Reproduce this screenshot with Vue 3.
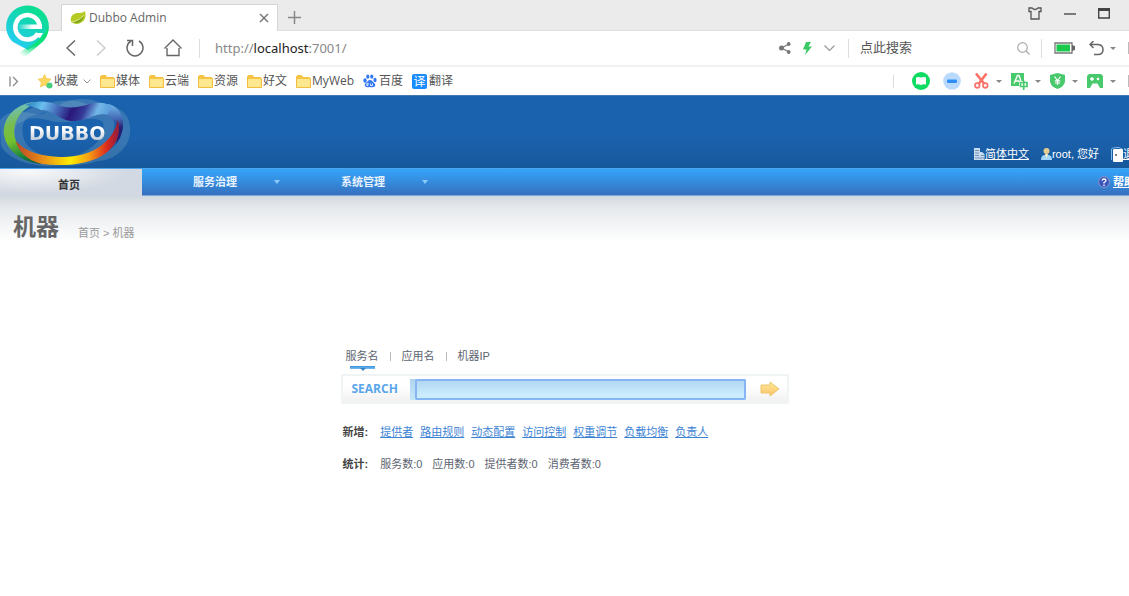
<script setup>
import { ref } from 'vue'

const folders = ['媒体', '云端', '资源', '好文', 'MyWeb']
const menus = ['服务治理', '系统管理']
const tabs = ['服务名', '应用名', '机器IP']
const links = ['提供者', '路由规则', '动态配置', '访问控制', '权重调节', '负载均衡', '负责人']
const stats = [
  ['服务数', 0],
  ['应用数', 0],
  ['提供者数', 0],
  ['消费者数', 0],
]
const activeTab = ref(0)
const keyword = ref('')
</script>

<template>
  <div class="window">
    <div class="browser">
      <svg class="brand" width="44" height="54" viewBox="0 0 44 54" aria-label="Browser">
        <defs>
          <linearGradient id="pin" x1="0.2" y1="1" x2="0.8" y2="0.1">
            <stop offset="0" stop-color="#27ccfb" />
            <stop offset="0.5" stop-color="#17d3c4" />
            <stop offset="1" stop-color="#0bdf8c" />
          </linearGradient>
          <linearGradient id="tail" x1="0.9" y1="0" x2="0.2" y2="1">
            <stop offset="0" stop-color="#06e070" />
            <stop offset="0.55" stop-color="#0be27a" />
            <stop offset="1" stop-color="#0be27a" stop-opacity="0" />
          </linearGradient>
          <linearGradient id="bar" x1="0" y1="0" x2="1" y2="0">
            <stop offset="0" stop-color="#fff" stop-opacity="0" />
            <stop offset="0.6" stop-color="#fff" />
          </linearGradient>
        </defs>
        <path d="M21.500 0.500A21 21 0 0 1 36 37L22 45L7 37A21 21 0 0 1 21.500 0.500Z" fill="url(#pin)" />
        <path d="M42.500 21Q43 33 33 40L20 51L11 52Q13 47 22 42Q38 34 42.500 21Z" fill="url(#tail)" />
        <path d="M33.700 22A12.200 12.200 0 1 0 32 28.500" fill="none" stroke="#fff" stroke-width="4.600" />
        <path d="M31.500 28H37L34 33L29 31Z" fill="#fff" />
        <path d="M12 19.500H36V24H12Z" fill="url(#bar)" />
      </svg>

      <div class="tabstrip">
        <div class="tab">
          <svg width="16" height="14" viewBox="0 0 16 14">
            <path d="M1 11C0 5 3 2 9 2Q13 2 15 0Q17 8 12 11Q7 15 1 11Z" fill="#b5ca22" />
            <path d="M2 11Q9 11 14 3Q13 12 6 12Z" fill="#7da51c" />
            <path d="M1 11Q9 10 14 4" stroke="#e2eb8d" fill="none" />
          </svg>
          <span class="tab-title">Dubbo Admin</span>
          <button class="plain" aria-label="关闭标签">
            <svg width="10" height="10" viewBox="0 0 10 10"><path d="M1 1L9 9M9 1L1 9" stroke="#777" stroke-width="1.500" /></svg>
          </button>
        </div>
        <button class="plain add" aria-label="新建标签">
          <svg width="13" height="13" viewBox="0 0 13 13"><path d="M6.500 0V13M0 6.500H13" stroke="#888" stroke-width="1.500" /></svg>
        </button>
        <div class="controls">
          <button class="plain" aria-label="皮肤">
            <svg width="14" height="13" viewBox="0 0 14 13"><path d="M1 1H4Q7 4 10 1H13V4.500H11V12H3V4.500H1Z" fill="none" stroke="#555" stroke-width="1.300" /></svg>
          </button>
          <button class="plain" aria-label="最小化">
            <svg width="12" height="12" viewBox="0 0 12 12"><path d="M0 7H12" stroke="#555" stroke-width="1.500" /></svg>
          </button>
          <button class="plain" aria-label="最大化">
            <svg width="12" height="11" viewBox="0 0 12 11"><path d="M0.700 1V10H11.300V1Z" fill="none" stroke="#444" stroke-width="1.400" /><path d="M0 0H12V3H0Z" fill="#444" /></svg>
          </button>
        </div>
      </div>

      <div class="address">
        <div class="nav-buttons">
          <button class="plain" aria-label="后退">
            <svg width="10" height="16" viewBox="0 0 10 16"><path d="M9 0.500L1 8L9 15.500" fill="none" stroke="#666" stroke-width="1.500" /></svg>
          </button>
          <button class="plain" aria-label="前进">
            <svg width="10" height="16" viewBox="0 0 10 16"><path d="M1 0.500L9 8L1 15.500" fill="none" stroke="#ccc" stroke-width="1.500" /></svg>
          </button>
          <button class="plain" aria-label="刷新">
            <svg width="18" height="18" viewBox="0 0 18 18"><path d="M13 2A8 8 0 1 1 5 2M1 1.500H6.500V7" fill="none" stroke="#666" stroke-width="1.500" /></svg>
          </button>
          <button class="plain" aria-label="主页">
            <svg width="18" height="18" viewBox="0 0 18 18"><path d="M0.500 9.500L9 1L17.500 9.500M3 9V16.500H15V9" fill="none" stroke="#666" stroke-width="1.400" /></svg>
          </button>
        </div>
        <i class="sep"></i>
        <div class="url">http://<b>localhost</b>:7001/</div>
        <div class="url-tools">
          <button class="plain" aria-label="分享">
            <svg width="12" height="12" viewBox="0 0 12 12"><path d="M10 2L2.500 6L10 10" fill="none" stroke="#777" stroke-width="1.200" /><g fill="#777"><circle cx="9.700" cy="2" r="1.900" /><circle cx="2.500" cy="6" r="2.500" /><circle cx="9.700" cy="10" r="1.900" /></g></svg>
          </button>
          <button class="plain" aria-label="加速">
            <svg width="9" height="13" viewBox="0 0 9 13"><path d="M3 0H8L5.500 4.500H9L2 13L3.500 7.500H0Z" fill="#3bc966" /></svg>
          </button>
          <button class="plain" aria-label="更多">
            <svg width="11" height="6" viewBox="0 0 11 6"><path d="M0.500 0.500L5.500 5.500L10.500 0.500" fill="none" stroke="#999" stroke-width="1.200" /></svg>
          </button>
        </div>
        <i class="sep"></i>
        <input class="quick" type="text" placeholder="点此搜索" aria-label="点此搜索" />
        <button class="plain" aria-label="搜索">
          <svg width="13" height="13" viewBox="0 0 13 13"><circle cx="5.500" cy="5.500" r="4.800" fill="none" stroke="#aaa" stroke-width="1.200" /><path d="M9 9L12.500 12.500" stroke="#aaa" stroke-width="1.200" /></svg>
        </button>
        <i class="sep after-find"></i>
        <div class="end-tools">
          <svg width="21" height="12" viewBox="0 0 21 12"><path d="M1 1H18V11H1Z" fill="#fff" stroke="#777" stroke-width="1.300" /><path d="M2.500 2.500H16V9.500H2.500Z" fill="#18c94c" /><path d="M18 3L21 4V8L18 9Z" fill="#666" /></svg>
          <button class="plain" aria-label="恢复标签">
            <svg width="15" height="15" viewBox="0 0 15 15"><path d="M1 3.500H9Q14 4 14 8.500Q14 13.500 9 13.500H5M4.500 0L1 3.500L4.500 7" fill="none" stroke="#666" stroke-width="1.500" /></svg>
          </button>
          <i class="caret"></i>
        </div>
        <i class="sliver"></i>
      </div>

      <div class="bookmarks">
        <button class="plain expand" aria-label="展开">
          <svg width="10" height="11" viewBox="0 0 10 11"><path d="M1 0.500V10.500M4 1L8.500 5.500L4 10" fill="none" stroke="#888" stroke-width="1.300" /></svg>
        </button>
        <button class="plain mark">
          <svg width="15" height="15" viewBox="0 0 15 15"><path d="M6.500 0.500L8.500 4.500L13 5.200L9.700 8.500L10.500 13L6.500 11L2.500 13L3.300 8.500L0.300 5.200L4.700 4.500Z" fill="#fdd85f" stroke="#f3c13e" stroke-width="0.700" /><circle cx="11.500" cy="11.500" r="3" fill="#47ce80" /></svg>
          <span>收藏</span>
          <svg class="fav-more" width="8" height="5" viewBox="0 0 8 5"><path d="M0.500 0.500L4 4L7.500 0.500" fill="none" stroke="#999" /></svg>
        </button>
        <a v-for="name in folders" :key="name" class="mark" href="#">
          <svg width="15" height="13" viewBox="0 0 15 13"><path d="M0.500 12.500V1.500L1.500 0.500H5.500L7 2.500H13.500L14.500 3.500V12.500Z" fill="#fde78f" stroke="#f2bc3d" /><path d="M0.500 4V1.500L1.500 0.500H5.500L7 2.500H13.500L14.500 4Z" fill="#f7c546" /></svg>
          <span>{{ name }}</span>
        </a>
        <a class="mark baidu" href="#">
          <svg width="14" height="14" viewBox="0 0 14 14"><g fill="#3378f5"><ellipse cx="2" cy="6.500" rx="1.700" ry="2.200" /><ellipse cx="4.800" cy="2.600" rx="1.600" ry="2.200" /><ellipse cx="8.800" cy="2.600" rx="1.600" ry="2.200" /><ellipse cx="12" cy="6" rx="1.600" ry="2.200" /><path d="M7 6Q9 6 10 8Q13 10 12 12Q11 14 7 13Q3 14 2 12Q1 10 4 8Q5 6 7 6Z" /></g><path d="M5 8.500V11.500H3.800V9.800H5M7.500 9.500V11.500H9.500V9.500" fill="none" stroke="#fff" stroke-width="0.800" /></svg>
          <span>百度</span>
        </a>
        <a class="mark" href="#"><span class="translate">译</span><span>翻译</span></a>
        <div class="plugins">
          <i class="sep short"></i>
          <button class="plain" aria-label="阅读">
            <svg width="18" height="18" viewBox="0 0 18 18"><circle cx="9" cy="9" r="9" fill="#0ddc62" /><path d="M4 5.500Q7 4.500 9 5.500Q11 4.500 14 5.500V12.500Q11 12 9 13Q7 12 4 12.500Z" fill="#fff" /></svg>
          </button>
          <button class="plain" aria-label="拦截">
            <svg width="18" height="18" viewBox="0 0 18 18"><circle cx="9" cy="9" r="8.800" fill="#b9dafd" /><rect x="4" y="7.500" width="10" height="3.500" rx="1" fill="#2f8efb" /></svg>
          </button>
          <button class="plain tool" aria-label="截图">
            <svg width="15" height="16" viewBox="0 0 15 16"><path d="M2 0.500L10.500 11M12.500 0.500L4.500 11" stroke="#fb7169" stroke-width="2.600" /><g fill="none" stroke="#fb7169" stroke-width="1.700"><circle cx="3.300" cy="12.500" r="2.300" /><circle cx="11.300" cy="12.500" r="2.300" /></g></svg>
            <i class="caret"></i>
          </button>
          <button class="plain tool" aria-label="翻译工具">
            <svg width="17" height="17" viewBox="0 0 17 17"><path d="M0 0H13V8H8V13H0Z" fill="#48c96c" /><path d="M3 10.500L6.500 2.500H8L10 8M4 8H8.500" fill="none" stroke="#fff" stroke-width="1.400" /><path d="M9.500 9.500H16V13.500H9.500ZM12.700 7.500V17" fill="none" stroke="#48c96c" stroke-width="1.700" /></svg>
            <i class="caret"></i>
          </button>
          <button class="plain tool" aria-label="网购保护">
            <svg width="15" height="16" viewBox="0 0 15 16"><path d="M7.500 0L15 2V8Q15 13 7.500 16Q0 13 0 8V2Z" fill="#48c96c" /><path d="M4.500 3.500L7.500 7.500L10.500 3.500M7.500 7V12M4.800 7.800H10.200M4.800 10H10.200" fill="none" stroke="#fff" stroke-width="1.200" /></svg>
            <i class="caret"></i>
          </button>
          <button class="plain tool" aria-label="游戏">
            <svg width="16" height="14" viewBox="0 0 16 14"><path d="M2 0H14L16 2V14H13L10.500 9.500H5.500L3 14H0V2Z" fill="#48c96c" /><path d="M3 5H7M5 3V7" stroke="#fff" stroke-width="1.300" /><circle cx="11" cy="5" r="1.300" fill="#fff" /></svg>
            <i class="caret"></i>
          </button>
        </div>
        <i class="sliver"></i>
      </div>
    </div>

    <header class="banner">
      <div class="logo">
        <svg width="132" height="72" viewBox="0 0 132 72">
          <defs>
            <linearGradient id="green" x1="0.500" y1="0" x2="0.700" y2="1">
              <stop offset="0" stop-color="#6fbfc2" /><stop offset="0.300" stop-color="#78bd4c" /><stop offset="0.550" stop-color="#76c12e" /><stop offset="0.850" stop-color="#15833b" /><stop offset="1" stop-color="#0b5c39" />
            </linearGradient>
            <linearGradient id="warm" x1="0" y1="0" x2="1" y2="0">
              <stop offset="0" stop-color="#b9472a" /><stop offset="0.250" stop-color="#e88a17" /><stop offset="0.530" stop-color="#ffec00" /><stop offset="0.700" stop-color="#f7a313" /><stop offset="0.880" stop-color="#dc2b1e" /><stop offset="1" stop-color="#8e1c3d" />
            </linearGradient>
            <linearGradient id="cool" x1="0" y1="0" x2="1" y2="0.100">
              <stop offset="0" stop-color="#2d83bc" /><stop offset="0.100" stop-color="#3c96cd" /><stop offset="0.220" stop-color="#6cc0ef" /><stop offset="0.420" stop-color="#4264b5" /><stop offset="0.580" stop-color="#29177a" /><stop offset="0.720" stop-color="#343b99" /><stop offset="0.870" stop-color="#73b7e8" /><stop offset="1" stop-color="#5b9fdd" />
            </linearGradient>
            <linearGradient id="side" x1="0" y1="0" x2="0" y2="1">
              <stop offset="0" stop-color="#72b9e9" /><stop offset="0.350" stop-color="#456db9" /><stop offset="0.600" stop-color="#25206f" /><stop offset="1" stop-color="#241b70" />
            </linearGradient>
          </defs>
          <g fill="#8eb6c8" fill-opacity="0.250" fill-rule="evenodd">
            <path d="M0 24C10 12 24 16 36 18C50 20 58 3 82 3C102 3 113 14 114 26C116 44 98 62 70 68C40 74 10 66 1 50ZM17 28C13 36 15 48 20 53C30 65 58 65 72 61C92 55 106 42 103 26C96 20 82 24 68 26C52 28 42 20 28 23Z" />
            <path d="M24 16C38 9 54 3 78 5L104 14C117 8 129 16 130 31C132 50 116 64 98 65C70 75 28 67 17 52C9 40 12 24 24 16ZM28 21C20 27 21 42 28 50C40 63 70 67 88 62C111 58 124 46 121 28Q116 12 105 18C90 22 74 10 60 12Z" />
          </g>
          <path d="M108 8C123 11 126 28 121 39C120 43 118 44 116 48Q121 27 110 21L103 16Z" fill="url(#side)" />
          <path d="M35 8C20 13 10 29 16 45C20 55 31 63 43 68C25 67 7 57 4 39C2 22 16 7 35 6Z" fill="url(#green)" />
          <path d="M25 9C36 4 47 5 55 8C66 13 76 12 90 8C99 6 106 6 112 11L107 19C98 15 90 24 75 25C59 26 55 14 41 14C37 12 31 10 25 9Z" fill="url(#cool)" />
          <path d="M16 45C26 57 43 60 60 61C90 62 113 47 118 24C121 36 118 48 106 57C92 68 65 71 42 68C26 64 18 55 16 45Z" fill="url(#warm)" />
        </svg>
        <strong class="logo-name">DUBBO</strong>
      </div>
      <div class="user">
        <a class="with-icon" href="#">
          <svg width="11" height="12" viewBox="0 0 11 12"><path d="M0 0H6V12H0ZM6 4H8L10.500 6V12H6Z" fill="#c7dbed" /><path d="M1 2.500H5M1 5H5M1 7.500H5M1 10H10M7 7.500H10" stroke="#6e92ba" /></svg>
          <u>简体中文</u>
        </a>
        <span class="with-icon">
          <svg width="11" height="12" viewBox="0 0 11 12"><circle cx="5.500" cy="3" r="3" fill="#e5cc91" /><path d="M0 12Q0 7 4 7H7Q11 7 11 12Z" fill="#a2d6fb" /><path d="M4 6H7L5.500 10Z" fill="#fff1c2" /></svg>
          root, 您好
        </span>
        <a class="with-icon" href="#">
          <svg width="12" height="15" viewBox="0 0 12 15"><path d="M0.500 13V2Q1 0.500 8 0.500L11 2" fill="none" stroke="#7fb8ea" /><rect x="2" y="2" width="10" height="13" rx="1" fill="#fff" /><path d="M4 8H6" stroke="#555" stroke-width="1.500" /></svg>
          <u>退出</u>
        </a>
      </div>
    </header>

    <nav class="menu">
      <a class="home" href="#">首页</a>
      <a v-for="name in menus" :key="name" class="item" href="#">{{ name }}<i class="arrow"></i></a>
      <a class="with-icon help" href="#">
        <svg width="12" height="12" viewBox="0 0 12 12"><circle cx="6" cy="6" r="5.400" fill="#3b55bb" stroke="#8795c4" /><path d="M4 4.500Q4.500 3 6 3Q8 3 8 4.500Q8 5.500 6 6.500V7.500M6 8.500V10" fill="none" stroke="#fff" stroke-width="1.300" /></svg>
        <u>帮助</u>
      </a>
    </nav>

    <main class="page">
      <div class="heading">
        <h1>机器</h1>
        <div class="crumbs"><a href="#">首页</a> &gt; 机器</div>
      </div>

      <section class="finder">
        <div class="kinds">
          <template v-for="(name, i) in tabs" :key="name">
            <i v-if="i" class="bar"></i>
            <button class="plain kind" :class="{ active: activeTab === i }" @click="activeTab = i">{{ name }}</button>
          </template>
        </div>
        <form class="search" @submit.prevent>
          <label for="keyword">SEARCH</label>
          <div class="field"><input id="keyword" v-model="keyword" type="text" /></div>
          <button class="plain go" aria-label="搜索服务">
            <svg width="20" height="16" viewBox="0 0 20 16">
              <defs><linearGradient id="gold" x1="0" y1="0" x2="0" y2="1"><stop offset="0" stop-color="#ffec9c" /><stop offset="1" stop-color="#fcbf66" /></linearGradient></defs>
              <path d="M1 4H10V1L19 8L10 15V12H1Z" fill="url(#gold)" stroke="#ecc66b" stroke-linejoin="round" />
            </svg>
          </button>
        </form>
        <div class="row">
          <span class="term">新增:</span>
          <a v-for="name in links" :key="name" href="#">{{ name }}</a>
        </div>
        <div class="row stats">
          <span class="term">统计:</span>
          <span v-for="[name, n] in stats" :key="name">{{ name }}:{{ n }}</span>
        </div>
      </section>
    </main>
  </div>
</template>

<style>
body {
  margin: 0;
  background: #fff;
}
</style>

<style scoped>
.window {
  min-height: 100vh;
  overflow: hidden;
  font: 11px/16px "Liberation Sans", "Noto Sans CJK SC", sans-serif;
  color: #5d6470;
  white-space: nowrap;
}
.window * {
  box-sizing: border-box;
}
svg {
  display: block;
  flex: none;
}
.plain {
  display: flex;
  align-items: center;
  padding: 0;
  border: 0;
  background: none;
  font: inherit;
  color: inherit;
  cursor: pointer;
}
.browser {
  position: relative;
  font-family: "Open Sans", "Noto Sans CJK SC", sans-serif;
  font-size: 12px;
  color: #555;
}
.brand {
  position: absolute;
  left: 6px;
  top: 5px;
}
.tabstrip {
  display: flex;
  align-items: center;
  height: 31px;
  padding-left: 61px;
  background: #ebebeb;
  border-bottom: 1px solid #ddd;
}
.tab {
  display: flex;
  align-items: center;
  gap: 3px;
  width: 217px;
  height: 27px;
  margin: 4px 0 -1px;
  padding: 0 8px;
  background: #fff;
  border: 1px solid #d5d5d5;
  border-bottom: 0;
}
.tab-title {
  flex: 1;
  color: #666;
}
.add {
  margin: 4px 0 0 10px;
}
.controls {
  display: flex;
  align-items: center;
  gap: 22px;
  margin: 0 19px 4px auto;
}
.address {
  display: flex;
  align-items: center;
  height: 36px;
  padding-left: 66px;
  border-bottom: 2px solid #f1f1f1;
}
.nav-buttons {
  display: flex;
  align-items: center;
  gap: 20px;
  margin-right: 17px;
}
.sep {
  width: 1px;
  height: 19px;
  background: #ddd;
}
.url {
  flex: 1;
  padding-left: 15px;
  font-family: "Noto Sans", sans-serif;
  font-size: 13px;
  color: #888;
}
.url b {
  font-weight: 400;
  color: #222;
}
.url-tools {
  display: flex;
  align-items: center;
  gap: 12px;
  margin-right: 13px;
}
.quick {
  width: 168px;
  padding: 0 0 0 11px;
  border: 0;
  outline: 0;
  background: none;
  font: 13px/20px "Liberation Sans", "Noto Sans CJK SC", sans-serif;
}
.quick::placeholder {
  color: #555;
}
.after-find {
  margin: 0 12px 0 11px;
}
.end-tools {
  display: flex;
  align-items: center;
  gap: 14px;
}
.end-tools .caret {
  margin-left: -8px;
}
.caret {
  border: 3px solid transparent;
  border-top-color: #888;
  border-bottom: 0;
}
.sliver {
  width: 1px;
  height: 12px;
  margin-left: 12px;
  background: #bbb;
}
.bookmarks {
  display: flex;
  align-items: center;
  gap: 9px;
  height: 28px;
  padding-left: 9px;
}
.expand {
  margin-right: 10px;
}
.mark {
  display: flex;
  align-items: center;
  gap: 1px;
  color: #555;
  text-decoration: none;
}
.baidu {
  gap: 2px;
}
.fav-more {
  margin-left: 4px;
}
.translate {
  width: 15px;
  margin-right: 1px;
  border-radius: 2px;
  background: #1a8cff;
  color: #fff;
  line-height: 15px;
  text-align: center;
}
.plugins {
  display: flex;
  align-items: center;
  gap: 13px;
  margin-left: auto;
}
.short {
  height: 13px;
  margin-right: 5px;
}
.tool {
  gap: 7px;
  margin-right: -4px;
}
.plugins .tool:last-child {
  margin-right: 0;
}
.bookmarks .sliver {
  margin-left: 3px;
}
.banner {
  display: flex;
  justify-content: space-between;
  height: 73px;
  border-top: 1px solid #4279ae;
  background: linear-gradient(#1b62ae 55%, #17589b);
}
.logo {
  position: relative;
}
.logo-name {
  position: absolute;
  left: 29px;
  top: 27px;
  font: bold 19px/20px "DejaVu Sans", sans-serif;
  background: linear-gradient(#fff 30%, #c3ccd7 85%);
  background-clip: text;
  color: transparent;
}
.user {
  display: flex;
  align-items: center;
  gap: 12px;
  margin: 44px -16px 0 0;
  color: #fff;
}
.with-icon {
  display: flex;
  align-items: center;
  color: #fff;
  text-decoration: none;
}
.menu {
  display: flex;
  height: 28px;
  border-top: 1px solid #4ba4ec;
  border-bottom: 1px solid #7da6d6;
  background: linear-gradient(#36a0f5 10%, #3570be);
  font-weight: bold;
  line-height: 32px;
}
.menu a {
  text-decoration: none;
}
.home {
  width: 142px;
  height: 28px;
  padding-right: 4px;
  background: radial-gradient(ellipse at 20% 10%, #f7f8fa, #d3d9e2 60%);
  color: #333;
  text-align: center;
}
.item {
  display: flex;
  align-items: center;
  width: 148px;
  padding-left: 51px;
  color: #e8f3ff;
}
.arrow {
  margin-left: 37px;
  border: 3px solid transparent;
  border-top: 4px solid #8bc9fa;
  border-bottom: 0;
}
.help {
  gap: 3px;
  margin: 0 -6px 0 auto;
}
.page {
  background: linear-gradient(#d3d9e1, #e6e9ed 12px, #fff 46px);
}
.heading {
  display: flex;
  gap: 19px;
  height: 48px;
  padding-left: 13px;
}
h1 {
  margin: 14px 0 0;
  font-size: 23px;
  line-height: 34px;
  color: #666;
}
.crumbs {
  margin-top: 29px;
  color: #999;
}
.crumbs a {
  color: inherit;
  text-decoration: none;
}
.finder {
  width: 448px;
  max-width: 100%;
  margin: 104px auto 0;
}
.kinds {
  display: flex;
  align-items: flex-start;
  height: 26px;
  padding-left: 5px;
}
.bar {
  width: 1px;
  height: 9px;
  margin: 4px 11px 0;
  background: #bbb;
}
.kind {
  position: relative;
}
.kind.active::before,
.kind.active::after {
  content: "";
  position: absolute;
}
.kind.active::before {
  left: 4px;
  top: 18px;
  width: 25px;
  height: 3px;
  background: linear-gradient(#3a93dc, #7abcf0);
}
.kind.active::after {
  left: 14px;
  top: 20px;
  border: 3px solid transparent;
  border-top-color: #3a85c4;
  border-bottom: 0;
}
.search {
  display: flex;
  align-items: center;
  height: 30px;
  border: 2px solid #f0f4f4;
  background: linear-gradient(#fff 40%, #f0f0f0);
}
.search label {
  padding: 0 12px 0 9px;
  font: bold 12px/20px "Open Sans", sans-serif;
  color: #5aa6ea;
}
.field {
  flex: 1;
  height: 21px;
  padding-left: 5px;
  background: linear-gradient(#b0d4ee, #c5e7f8);
}
.field input {
  display: block;
  width: 100%;
  height: 21px;
  padding: 0 4px;
  border: 2px solid #86b5f6;
  border-radius: 2px;
  outline: 0;
  background: linear-gradient(#b1d7f2, #cbecfd 80%);
  font: inherit;
}
.go {
  margin: 0 7px 0 14px;
}
.row {
  display: flex;
  gap: 7px;
  margin: 20px 0 -4px 2px;
}
.row a {
  color: #3c83d4;
  text-decoration: underline;
}
.term {
  margin-right: 5px;
  color: #444;
  font-weight: bold;
}
.stats {
  gap: 10px;
}
.stats .term {
  margin-right: 2px;
}
</style>
